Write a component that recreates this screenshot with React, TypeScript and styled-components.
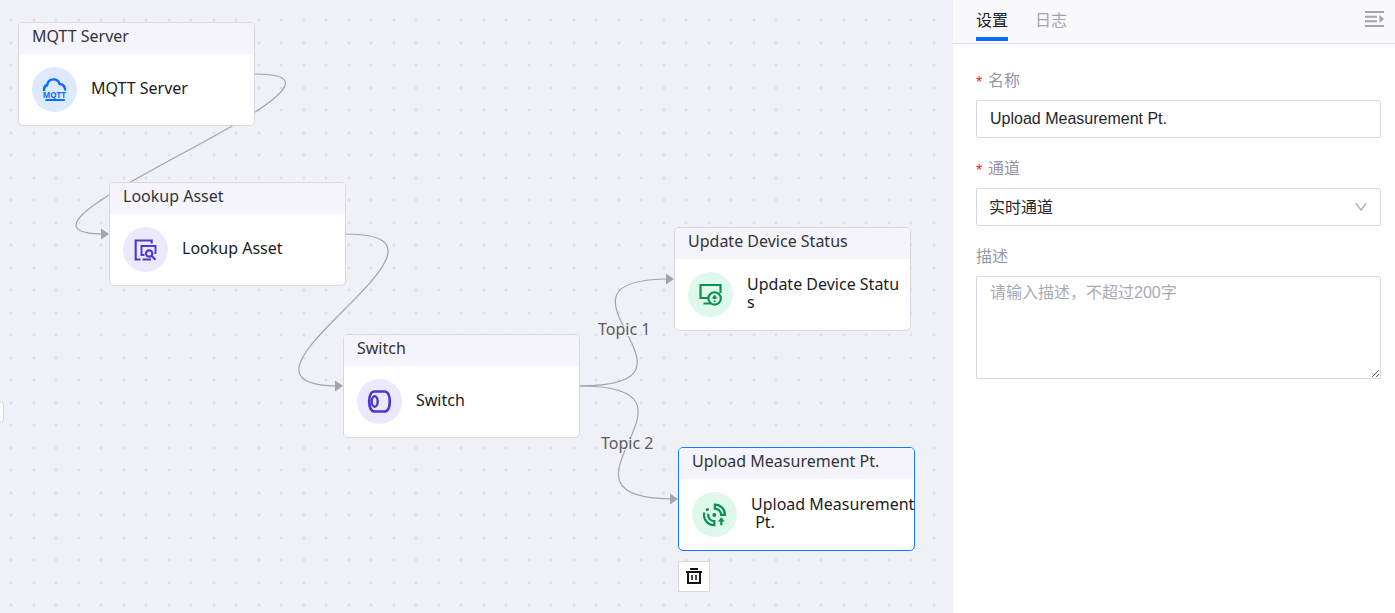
import React, { useState } from 'react';
import styled, { createGlobalStyle } from 'styled-components';

const GlobalStyle = createGlobalStyle`
  *, *::before, *::after { box-sizing: border-box; }
  body {
    margin: 0;
    color: #26262e;
    font-family: "Liberation Sans", "Noto Sans CJK SC", sans-serif;
    font-size: 16px;
  }
  button, input, select, textarea { font: inherit; color: inherit; margin: 0; }
`;

const Page = styled.div`
  display: flex;
  min-height: 100vh;
`;

const dot = 'radial-gradient(circle at 2px 2px, #dfe0e5 1px, transparent 2px)';

const Canvas = styled.main`
  position: relative;
  flex: 1;
  min-width: 0;
  overflow: hidden;
  background-color: #f0f1f6;
  background-image: ${dot}, ${dot}, ${dot}, ${dot};
  background-size: 45px 45px;
  background-position: 9px 18px, 32px 18px, 9px 41px, 32px 41px;
  font-family: "Noto Sans", "Noto Sans CJK SC", sans-serif;
`;

const Edges = styled.svg`
  position: absolute;
  inset: 0;
  width: 100%;
  height: 100%;
`;

const EdgeLabel = styled.span<{ $x: number; $y: number }>`
  position: absolute;
  left: ${(p) => p.$x}px;
  top: ${(p) => p.$y}px;
  line-height: 20px;
  color: #5c5c60;
  white-space: nowrap;
  text-shadow: 1px 0 #f0f1f6, -1px 0 #f0f1f6, 0 1px #f0f1f6, 0 -1px #f0f1f6, 1px 1px #f0f1f6, -1px -1px #f0f1f6;
`;

const Node = styled.article<{ $x: number; $y: number; $selected?: boolean }>`
  position: absolute;
  left: ${(p) => p.$x}px;
  top: ${(p) => p.$y}px;
  width: 237px;
  background: #fff;
  border: 1px solid ${(p) => (p.$selected ? '#1677ff' : '#d8d8e2')};
  border-radius: 5px;
`;

const NodeTitle = styled.header`
  height: 31px;
  padding: 0 13px;
  line-height: 26px;
  color: #33333b;
  background: #f5f4fa;
  border-radius: 4px 4px 0 0;
`;

const NodeBody = styled.div`
  display: flex;
  align-items: center;
  gap: 14px;
  height: 71px;
  padding-left: 13px;
`;

const NodeText = styled.p`
  margin: 0;
  padding-bottom: 3px;
  line-height: 18px;
  color: #1c1c22;
  white-space: pre;
`;

const tones = {
  blue: { bg: '#dde9ff', fg: '#0a6cff' },
  violet: { bg: '#ece8fd', fg: '#5035d0' },
  green: { bg: '#dff8ec', fg: '#0a9150' },
};

const Badge = styled.svg<{ $tone: keyof typeof tones }>`
  flex: none;
  width: 45px;
  height: 45px;
  border-radius: 50%;
  background: ${(p) => tones[p.$tone].bg};
  color: ${(p) => tones[p.$tone].fg};
  fill: none;
  stroke: currentColor;
  stroke-width: 2;
`;

const DeleteButton = styled.button`
  position: absolute;
  left: 678px;
  top: 561px;
  display: grid;
  place-items: center;
  width: 32px;
  height: 31px;
  padding: 0;
  color: #111;
  background: #fff;
  border: 1px solid #d8d8e2;
`;

const DrawerHandle = styled.button`
  position: absolute;
  left: -8px;
  top: 401px;
  width: 12px;
  height: 22px;
  padding: 0;
  background: #fff;
  border: 1px solid #d8d8e2;
  border-radius: 4px;
`;

const Panel = styled.aside`
  flex: 0 0 442px;
  background: #fff;
`;

const PanelHeader = styled.header`
  display: flex;
  align-items: flex-start;
  justify-content: space-between;
  height: 44px;
  padding: 0 10px 0 23px;
  background: #f9f9fc;
  border-bottom: 1px solid #e3e3ea;
`;

const Tabs = styled.div`
  display: flex;
  gap: 27px;
`;

const Tab = styled.button<{ $active?: boolean }>`
  height: 41px;
  padding: 4px 0 0;
  line-height: 33px;
  color: ${(p) => (p.$active ? '#1c1c22' : '#a3a3b1')};
  background: none;
  border: 0;
  border-bottom: 4px solid ${(p) => (p.$active ? '#0a6cff' : 'transparent')};
`;

const CollapseButton = styled.button`
  display: grid;
  place-items: center;
  height: 38px;
  padding: 0;
  color: #a3a3b1;
  background: none;
  border: 0;
`;

const Form = styled.form`
  display: flex;
  flex-direction: column;
  gap: 20px;
  padding: 26px 14px 26px 23px;
`;

const Field = styled.div`
  display: flex;
  flex-direction: column;
  gap: 9px;
`;

const Label = styled.label`
  display: flex;
  gap: 5px;
  height: 21px;
  line-height: 21px;
  color: #9696a5;
`;

const Required = styled.span`
  width: 7px;
  padding-top: 2px;
  color: #f5222d;
`;

const Input = styled.input`
  width: 100%;
  height: 38px;
  padding: 0 13px;
  background: #fff;
  border: 1px solid #d8d8e2;
  border-radius: 2px;
`;

const SelectBox = styled.div`
  display: grid;
  align-items: center;

  > * { grid-area: 1 / 1; }
  > svg { justify-self: end; margin-right: 14px; pointer-events: none; }
`;

const Select = styled.select`
  width: 100%;
  height: 38px;
  padding: 0 12px;
  appearance: none;
  background: #fff;
  border: 1px solid #d8d8e2;
  border-radius: 2px;
`;

const TextArea = styled.textarea`
  display: block;
  width: 100%;
  height: 103px;
  padding: 4px 13px;
  line-height: 24px;
  background: #fff;
  border: 1px solid #d8d8e2;
  border-radius: 2px;
  resize: vertical;

  &::placeholder { color: #a9a9b6; opacity: 1; }
`;

const MqttIcon = () => (
  <Badge $tone="blue" viewBox="0 0 45 45" aria-hidden="true">
    <path d="M12.2 24c-.6-3 .6-5.200 3-6 .5-3.700 3-5.600 6.300-5.600 3 0 5.200 1.700 6.200 4.600 3.300.4 5.500 3 5.500 6.600" strokeWidth="2.400" />
    <text x="22.300" y="31" textAnchor="middle" fontSize="8" fontWeight="700" fontFamily="Open Sans, sans-serif" fill="currentColor" stroke="none">MQTT</text>
    <path d="M13.500 33h19.300" strokeWidth="2.200" />
  </Badge>
);

const LookupIcon = () => (
  <Badge $tone="violet" viewBox="0 0 45 45" aria-hidden="true">
    <path d="M28.700 16.500v-3h-16v19H17.500M19.600 32.500h8.400" strokeWidth="2.100" />
    <path d="M21.500 28H18.500v-9h14V27" strokeWidth="1.900" />
    <circle cx="26.200" cy="26.500" r="3.200" strokeWidth="2.200" />
    <path d="M28.500 28.800l4 4" strokeWidth="2.200" />
  </Badge>
);

const SwitchIcon = () => (
  <Badge $tone="violet" viewBox="0 0 45 45" aria-hidden="true">
    <path d="M17.500 12.500h10c3.400 0 5.300 4.300 5.300 10s-1.900 10-5.300 10h-10c-3.400 0-5.300-4.300-5.300-10s1.900-10 5.300-10z" strokeWidth="2.700" />
    <ellipse cx="17.700" cy="22.500" rx="3" ry="5.200" strokeWidth="2.400" />
  </Badge>
);

const DeviceIcon = () => (
  <Badge $tone="green" viewBox="0 0 45 45" aria-hidden="true">
    <path d="M20.500 26h-8V13h20v8M15.500 31.500h7.200" strokeWidth="2.200" />
    <circle cx="26.600" cy="26.400" r="6.200" strokeWidth="2.100" />
    <path d="M26.600 23.400v3.800M26.600 28.400v1.600" />
    <path d="M23.600 26.600l3-3.600 3 3.600z" fill="currentColor" stroke="none" />
  </Badge>
);

const UploadIcon = () => (
  <Badge $tone="green" viewBox="0 0 45 45" aria-hidden="true">
    <circle cx="22.300" cy="22.900" r="2" fill="currentColor" stroke="none" />
    <circle cx="15.300" cy="17.500" r="1.600" fill="currentColor" stroke="none" />
    <path d="M22.800 12.600a10.300 10.300 0 0 1 10.300 10.300h-4a6.300 6.300 0 0 0-6.300-6.300z" strokeWidth="2.200" />
    <path d="M12.300 20.500A10.300 10.300 0 0 0 22.300 33.200v-4A6.300 6.300 0 0 1 16.200 21.800" strokeWidth="2.200" />
    <path d="M29.300 33.300v-5" strokeWidth="2.200" />
    <path d="M25.900 29.500l3.400-4.200 3.400 4.200z" fill="currentColor" stroke="none" />
  </Badge>
);

const nodes = [
  { x: 18, y: 22, title: 'MQTT Server', text: 'MQTT Server', Icon: MqttIcon },
  { x: 109, y: 182, title: 'Lookup Asset', text: 'Lookup Asset', Icon: LookupIcon },
  { x: 343, y: 334, title: 'Switch', text: 'Switch', Icon: SwitchIcon },
  { x: 674, y: 227, title: 'Update Device Status', text: 'Update Device Statu\ns', Icon: DeviceIcon },
  { x: 678, y: 447, title: 'Upload Measurement Pt.', text: 'Upload Measurement\n Pt.', Icon: UploadIcon, selected: true },
];

const REACH = 147;

const edges = [
  { from: [255, 74], to: [109, 234] },
  { from: [346, 234], to: [343, 386] },
  { from: [580, 386], to: [674, 279] },
  { from: [580, 386], to: [678, 499] },
];

export default function App() {
  const [tab, setTab] = useState('settings');
  const [name, setName] = useState('Upload Measurement Pt.');

  return (
    <Page>
      <GlobalStyle />
      <Canvas>
        <Edges aria-hidden="true">
          {edges.map(({ from: [x1, y1], to: [x2, y2] }) => (
            <g key={`${x1}-${y1}-${x2}-${y2}`}>
              <path
                d={`M${x1} ${y1}C${x1 + REACH} ${y1} ${x2 - REACH} ${y2} ${x2 - 4} ${y2}`}
                fill="none"
                stroke="#a3a3b1"
                strokeWidth="1.200"
              />
              <path d={`M${x2} ${y2}l-8 -5.500v11z`} fill="#a3a3b1" />
            </g>
          ))}
        </Edges>
        <EdgeLabel $x={598} $y={319}>Topic 1</EdgeLabel>
        <EdgeLabel $x={601} $y={433}>Topic 2</EdgeLabel>
        {nodes.map(({ x, y, title, text, Icon, selected }) => (
          <Node key={title} $x={x} $y={y} $selected={selected}>
            <NodeTitle>{title}</NodeTitle>
            <NodeBody>
              <Icon />
              <NodeText>{text}</NodeText>
            </NodeBody>
          </Node>
        ))}
        <DeleteButton type="button" aria-label="删除">
          <svg width="18" height="17" viewBox="0 0 18 17" fill="none" stroke="currentColor" strokeWidth="2" aria-hidden="true">
            <path d="M5 1h8M1 4h16M3 4v11h12V4" />
            <path d="M7 7v5M11 7v5" strokeWidth="1.500" />
          </svg>
        </DeleteButton>
        <DrawerHandle type="button" aria-label="展开" />
      </Canvas>

      <Panel>
        <PanelHeader>
          <Tabs role="tablist">
            <Tab type="button" role="tab" aria-selected={tab === 'settings'} $active={tab === 'settings'} onClick={() => setTab('settings')}>设置</Tab>
            <Tab type="button" role="tab" aria-selected={tab === 'logs'} $active={tab === 'logs'} onClick={() => setTab('logs')}>日志</Tab>
          </Tabs>
          <CollapseButton type="button" aria-label="收起">
            <svg width="20" height="16" viewBox="0 0 20 16" fill="currentColor" aria-hidden="true">
              <path d="M0 0h19v2H0zM0 4.700h12v2H0zM0 9.300h12v2H0zM0 14h19v2H0zM14.500 4l4.500 4-4.500 4z" />
            </svg>
          </CollapseButton>
        </PanelHeader>
        <Form>
          <Field>
            <Label htmlFor="name"><Required>*</Required>名称</Label>
            <Input id="name" value={name} onChange={(e) => setName(e.target.value)} required />
          </Field>
          <Field>
            <Label htmlFor="channel"><Required>*</Required>通道</Label>
            <SelectBox>
              <Select id="channel" required>
                <option>实时通道</option>
              </Select>
              <svg width="12" height="8" viewBox="0 0 12 8" fill="none" stroke="#a9a9b6" strokeWidth="1.300" aria-hidden="true">
                <path d="M1 0.500l5 6.500 5-6.500" />
              </svg>
            </SelectBox>
          </Field>
          <Field>
            <Label htmlFor="description">描述</Label>
            <TextArea id="description" placeholder="请输入描述，不超过200字" />
          </Field>
        </Form>
      </Panel>
    </Page>
  );
}
